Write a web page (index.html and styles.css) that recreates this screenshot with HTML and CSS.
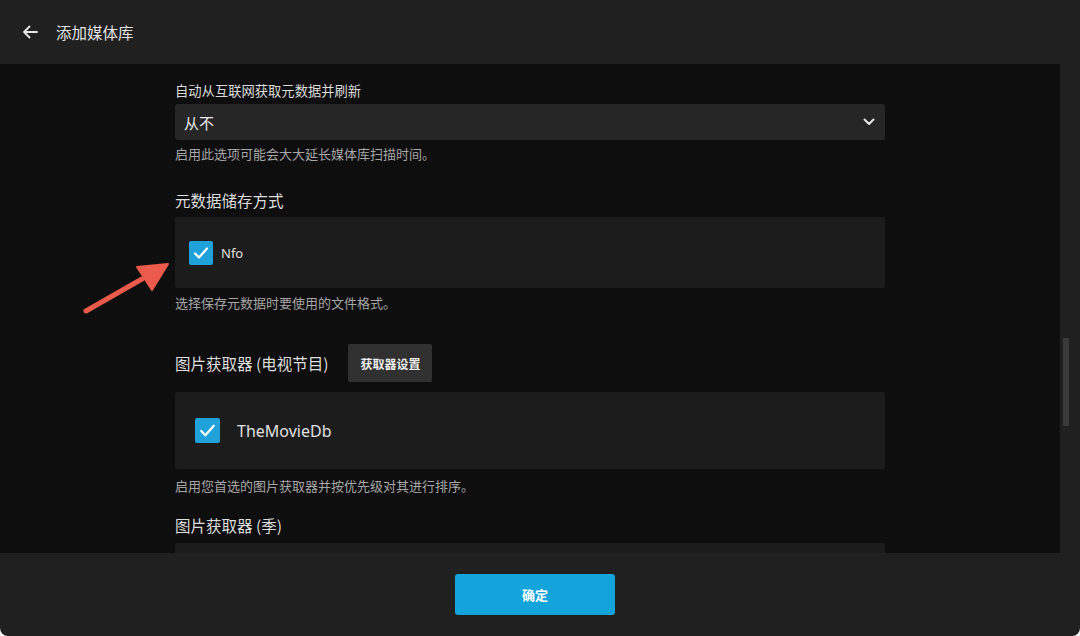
FILE: index.html
```html
<!DOCTYPE html>
<html lang="zh-CN">
<head>
<meta charset="utf-8">
<title>添加媒体库</title>
<link rel="stylesheet" href="styles.css">
</head>
<body>
<div class="window">
  <header class="header">
    <svg class="back" width="16" height="14" viewBox="0 0 16 14"><path d="M15 7H2M7.5 1.5L2 7l5.5 5.5" fill="none" stroke="#e6e6e6" stroke-width="1.8" stroke-linecap="round" stroke-linejoin="round"/></svg>
    <h1 class="title">添加媒体库</h1>
  </header>
  <div class="main">
    <div class="scroll">
      <div class="col">
        <label class="label">自动从互联网获取元数据并刷新</label>
        <div class="select">
          <span>从不</span>
          <svg width="12" height="8" viewBox="0 0 12 8"><path d="M1.5 1.5L6 6l4.5-4.5" fill="none" stroke="#e6e6e6" stroke-width="2" stroke-linecap="round" stroke-linejoin="round"/></svg>
        </div>
        <p class="help help1">启用此选项可能会大大延长媒体库扫描时间。</p>

        <h2 class="heading h-store">元数据储存方式</h2>
        <div class="box box-nfo">
          <span class="check check-sm"><svg viewBox="0 0 24 24"><path d="M6 12.5l4 4 8-9" fill="none" stroke="#fff" stroke-width="2.2" stroke-linecap="round" stroke-linejoin="round"/></svg></span>
          <span class="opt-sm">Nfo</span>
        </div>
        <p class="help help2">选择保存元数据时要使用的文件格式。</p>

        <div class="row-head">
          <h2 class="heading">图片获取器 (电视节目)</h2>
          <button class="btn-sec">获取器设置</button>
        </div>
        <div class="box box-tmdb">
          <span class="check check-lg"><svg viewBox="0 0 24 24"><path d="M6 12.5l4 4 8-9" fill="none" stroke="#fff" stroke-width="2.2" stroke-linecap="round" stroke-linejoin="round"/></svg></span>
          <span class="opt-lg">TheMovieDb</span>
        </div>
        <p class="help help3">启用您首选的图片获取器并按优先级对其进行排序。</p>

        <h2 class="heading h-season">图片获取器 (季)</h2>
        <div class="box box-season"></div>
      </div>
    </div>
    <div class="scrollbar"><div class="thumb"></div></div>
  </div>
  <footer class="footer">
    <button class="btn-primary">确定</button>
  </footer>
  <svg class="annot" width="100" height="60" viewBox="0 0 100 60">
    <line x1="6" y1="51" x2="62" y2="19" stroke="#ec5a4b" stroke-width="5" stroke-linecap="round"/>
    <polygon points="88,4 57,7 72,30" fill="#ec5a4b" stroke="#ec5a4b" stroke-width="2" stroke-linejoin="round"/>
  </svg>
</div>
</body>
</html>
```

FILE: styles.css
```css
* { box-sizing: border-box; }
html, body { margin: 0; padding: 0; }
body {
  background: #f4f4f4;
  font-family: "Noto Sans", "Noto Sans CJK SC", sans-serif;
  color: #e0e0e0;
}
.window {
  position: relative;
  width: 1080px;
  height: 636px;
  background: #202020;
  border-radius: 0 0 8px 8px;
  display: flex;
  flex-direction: column;
  overflow: hidden;
}
.header {
  height: 64px;
  flex: none;
  display: flex;
  align-items: center;
  padding-left: 22px;
}
.back { display: block; margin-right: 18px; }
.title {
  margin: 0;
  font-size: 15.5px;
  font-weight: 400;
  color: #e4e4e4;
  font-family: "Noto Sans CJK SC", sans-serif;
}
.main {
  height: 489px;
  flex: none;
  display: flex;
}
.scroll {
  width: 1060px;
  background: #0e0e0e;
  overflow: hidden;
  padding-left: 175px;
}
.col { width: 710px; }
.label {
  display: block;
  margin-top: 19px;
  font-size: 13.3px;
  line-height: 16px;
  color: #dcdcdc;
  font-family: "Noto Sans CJK SC", sans-serif;
}
.select {
  margin-top: 5px;
  height: 36px;
  background: #262626;
  border-radius: 3px;
  display: flex;
  align-items: center;
  justify-content: space-between;
  padding: 0 10px 0 9px;
  font-size: 15px;
  color: #e8e8e8;
  font-family: "Noto Sans CJK SC", sans-serif;
}
.help {
  margin: 0;
  font-size: 13px;
  line-height: 16px;
  color: #a6a6a6;
  font-family: "Noto Sans CJK SC", sans-serif;
}
.help1 { margin-top: 6px; }
.help2 { margin-top: 7px; }
.help3 { margin-top: 9px; }
.heading {
  margin: 0;
  font-size: 15.5px;
  line-height: 20px;
  font-weight: 400;
  color: #dedede;
  font-family: "Noto Sans CJK SC", sans-serif;
}
.h-store { margin-top: 28px; }
.h-season { margin-top: 21px; }
.box {
  background: #1c1c1c;
  border-radius: 2px;
  display: flex;
  align-items: center;
}
.box-nfo { margin-top: 7px; height: 71px; padding-left: 14px; gap: 8px; }
.box-tmdb { margin-top: 10px; height: 77px; padding-left: 20px; gap: 17px; }
.box-season { margin-top: 8px; height: 80px; }
.check {
  display: flex;
  align-items: center;
  justify-content: center;
  background: #1fa2da;
  border-radius: 2px;
}
.check svg { width: 100%; height: 100%; }
.check-sm { width: 24px; height: 24px; }
.check-lg { width: 25px; height: 25px; }
.opt-sm { font-size: 13px; color: #e0e0e0; }
.opt-lg { font-size: 16px; color: #e0e0e0; }
.row-head {
  margin-top: 33px;
  height: 38px;
  display: flex;
  align-items: center;
  gap: 20px;
}
.btn-sec {
  height: 38px;
  padding: 0 12px;
  border: none;
  border-radius: 2px;
  background: #303030;
  color: #ececec;
  font-size: 12px;
  font-weight: 700;
  font-family: "Noto Sans CJK SC", sans-serif;
}
.scrollbar {
  width: 20px;
  position: relative;
  background: #202020;
}
.thumb {
  margin: 274px 0 0 3px;
  width: 6px;
  height: 88px;
  background: #3a3a3a;
  border-radius: 1px;
}
.footer {
  flex: 1;
  display: flex;
  justify-content: center;
  padding-top: 21px;
}
.btn-primary {
  width: 160px;
  height: 41px;
  border: none;
  border-radius: 3px;
  background: #14a4dc;
  color: #fff;
  font-size: 13px;
  font-weight: 700;
  font-family: "Noto Sans CJK SC", sans-serif;
  margin-left: -10px;
}
.annot {
  position: absolute;
  left: 80px;
  top: 260px;
}
```
